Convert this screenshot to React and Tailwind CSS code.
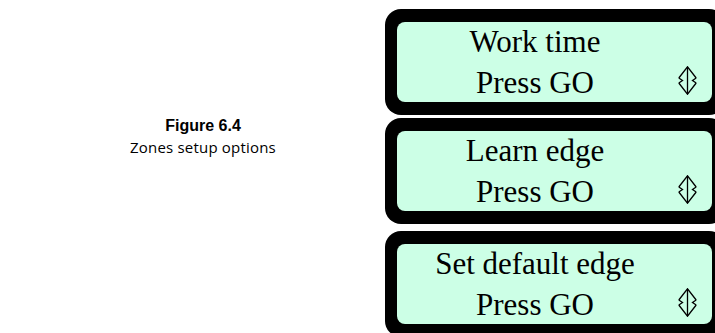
const MENUS = [
  { title: "Work time", gap: "mt-[9px]" },
  { title: "Learn edge", gap: "mt-[3px]" },
  { title: "Set default edge", gap: "mt-[7px]" },
];

export default function App() {
  return (
    <div className="w-[715px] h-[333px] overflow-hidden bg-white flex">
      {/* left: figure caption */}
      <div className="w-[385px] shrink-0 pt-[115px]">
        <div className="ml-[113px] w-[180px] text-center text-black">
          <div className="font-['Liberation_Sans',Arial,sans-serif] font-bold text-[16px] leading-[21px]">
            Figure 6.4
          </div>
          <div className="font-['Open_Sans',sans-serif] text-[15px] leading-[23px] tracking-[0.2px]">
            Zones setup options
          </div>
        </div>
      </div>

      {/* right: LCD screens */}
      <div className="flex flex-col shrink-0">
        {MENUS.map(m => <Screen key={m.title} title={m.title} gap={m.gap} />)}
      </div>
    </div>
  );
}

function Screen({ title, gap }) {
  return (
    <div className={`${gap} w-[340px] bg-black rounded-[16px] pt-[13px] pb-[13px] pl-[12px] pr-[13px]`}>
      <div className="h-[80px] bg-[#ccffe6] rounded-[8px] flex">
        <div className="w-[276px] flex flex-col justify-center items-center font-['Liberation_Serif','Times_New_Roman',serif] text-[31px] leading-[41px] text-black whitespace-nowrap">
          <span>{title}</span>
          <span>Press GO</span>
        </div>
        <div className="flex-1 flex items-end pb-[7px] pl-[5px]">
          <UpDownArrow />
        </div>
      </div>
    </div>
  );
}

function UpDownArrow() {
  return (
    <svg width="19" height="29" viewBox="0 0 19 29" fill="none" stroke="black" strokeWidth="1.3" strokeLinejoin="miter">
      <path d="M0.8 12 L9.5 0.8 L18.2 12" />
      <path d="M0.8 12 L4.5 14.5 L0.8 17" />
      <path d="M18.2 12 L14.5 14.5 L18.2 17" />
      <path d="M0.8 17 L9.5 28.2 L18.2 17" />
      <path d="M9.5 0.8 L9.5 28.2" />
    </svg>
  );
}
